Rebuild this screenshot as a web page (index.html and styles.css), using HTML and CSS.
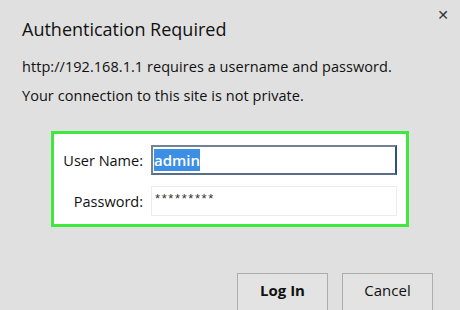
FILE: index.html
```html
<!DOCTYPE html>
<html lang="en">

<head>
    <meta charset="utf-8">
    <meta name="viewport" content="width=device-width, initial-scale=1.0">
    <title>Authentication Required</title>
    <link rel="stylesheet" href="styles.css">
</head>

<body>
    <div class="dialog">
        <button class="luk">&#x2715;</button>
        <h1>Authentication Required</h1>
        <p class="info">http://192.168.1.1 requires a username and password.</p>
        <p class="info">Your connection to this site is not private.</p>

        <form class="login">
            <div class="row">
                <label for="user">User Name:</label>
                <div class="felt aktiv" id="user"><span class="markeret">admin</span></div>
            </div>
            <div class="row">
                <label for="pass">Password:</label>
                <div class="felt skjult" id="pass">*********</div>
            </div>
        </form>

        <div class="knapper">
            <button class="knap primær">Log In</button>
            <button class="knap">Cancel</button>
        </div>
    </div>
</body>

</html>
```

FILE: styles.css
```css
body {
    margin: 0;
    background-color: #e0e0e0;
    font-family: "Open Sans", "Noto Sans", sans-serif;
    color: #111;
    overflow: hidden;
}

.dialog {
    position: relative;
    width: 460px;
    height: 310px;
    padding: 16px 0 0 22px;
    box-sizing: border-box;
}

.luk {
    position: absolute;
    top: 5px;
    right: 9px;
    border: none;
    background: none;
    font-size: 14px;
    font-weight: bold;
    color: #333;
    padding: 2px;
    font-family: "DejaVu Sans", sans-serif;
}

h1 {
    margin: 0;
    font-size: 18px;
    font-weight: normal;
    line-height: 26px;
}

.info {
    margin: 0;
    font-size: 14.5px;
    line-height: 17px;
    letter-spacing: 0.05px;
}

h1 + .info {
    margin-top: 16px;
}

.info + .info {
    margin-top: 12px;
}

.login {
    margin: 27px 0 0 29px;
    width: 358px;
    height: 96px;
    box-sizing: border-box;
    border: 3px solid #3ee83e;
    background-color: #fff;
    padding: 11px 0 0 0;
    display: flex;
    flex-direction: column;
    gap: 11px;
}

.row {
    display: flex;
    align-items: center;
    height: 30px;
}

.row label {
    width: 89px;
    text-align: right;
    font-size: 14.5px;
    margin-right: 8px;
}

.felt {
    width: 246px;
    height: 30px;
    box-sizing: border-box;
    border: 1px solid #ececec;
    font-size: 13px;
    padding: 4px 0 0 3px;
    font-family: "Liberation Sans", sans-serif;
    color: #333;
}

.skjult {
    letter-spacing: 1.6px;
}

.felt.aktiv {
    border: 2px solid #718294;
    border-right-color: #2c4f86;
    border-bottom-color: #5a6f87;
    padding: 3px 0 0 1px;
}

.markeret {
    background-color: #3d8fe6;
    color: #fff;
    font-family: "Open Sans", sans-serif;
    font-size: 15px;
    font-weight: 600;
    padding: 1px 0;
}

.knapper {
    display: flex;
    gap: 14px;
    margin: 46px 0 0 215px;
}

.knap {
    width: 91px;
    height: 40px;
    border: 1px solid #adadad;
    background-color: #e3e3e3;
    font-family: "Open Sans", sans-serif;
    font-size: 15px;
    color: #111;
    padding: 0 0 6px 0;
}

.primær {
    font-weight: bold;
}
```
